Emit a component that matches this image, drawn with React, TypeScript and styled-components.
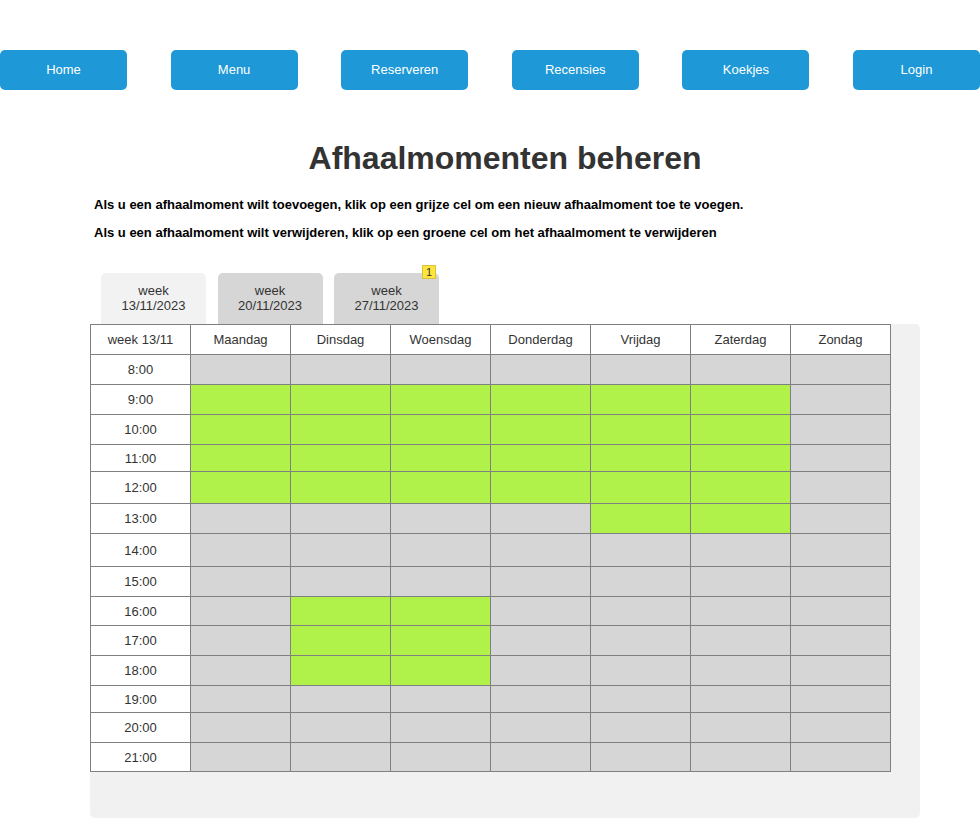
import React from "react";
import styled, { createGlobalStyle } from "styled-components";

const Global = createGlobalStyle`
  html, body { margin: 0; padding: 0; background: #ffffff; }
  body { font-family: "Liberation Sans", Arial, sans-serif; color: #333333; }
`;

const Nav = styled.nav`
  display: flex;
  justify-content: space-between;
  margin-top: 50px;
  width: 980px;
`;

const NavButton = styled.a`
  display: flex;
  align-items: center;
  justify-content: center;
  width: 127px;
  height: 40px;
  box-sizing: border-box;
  padding-bottom: 1px;
  border-radius: 5px;
  background: #1e98d6;
  color: #ffffff;
  font-size: 13px;
  text-decoration: none;
`;

const Main = styled.main`
  margin-left: 90px;
  width: 830px;
`;

const Title = styled.h1`
  margin: 50px 0 20px;
  font-size: 32px;
  font-weight: bold;
  text-align: center;
  color: #333333;
`;

const Intro = styled.p`
  margin: 13px 0 0;
  padding-left: 4px;
  font-size: 13px;
  font-weight: bold;
  color: #000000;
  line-height: 15px;
`;

const Tabs = styled.div`
  display: flex;
  gap: 11.5px;
  margin-top: 33px;
  padding-left: 11px;
`;

const Tab = styled.div<{ $active?: boolean }>`
  position: relative;
  width: 105px;
  height: 51px;
  box-sizing: border-box;
  padding-top: 10px;
  border-radius: 5px 5px 0 0;
  background: ${(p) => (p.$active ? "#f2f2f2" : "#d6d6d6")};
  text-align: center;
  font-size: 13px;
  line-height: 15px;
  color: #333333;
`;

const Badge = styled.span`
  position: absolute;
  top: -8px;
  right: 3px;
  width: 14px;
  height: 14px;
  box-sizing: border-box;
  border: 1px solid #d6c33a;
  background: #ffe53b;
  font-size: 11px;
  line-height: 12px;
  text-align: center;
  color: #333333;
`;

const Panel = styled.section`
  background: #f1f1f1;
  border-radius: 0 5px 5px 5px;
  padding-bottom: 46px;
`;

const Grid = styled.div`
  display: grid;
  width: 801px;
  box-sizing: border-box;
  grid-template-columns: repeat(8, 99px);
  grid-template-rows: 29px 29px 29px 29px 26px 31px 29px 32px 29px 28px 29px 29px 26px 29px 28px;
  gap: 1px;
  padding: 1px;
  background: #808080;
`;

const Cell = styled.div<{ $kind: "label" | "free" | "open" }>`
  display: flex;
  align-items: center;
  justify-content: center;
  font-size: 13px;
  color: #333333;
  background: ${(p) =>
    p.$kind === "label" ? "#ffffff" : p.$kind === "open" ? "#b1f24a" : "#d6d6d6"};
`;

const navItems = ["Home", "Menu", "Reserveren", "Recensies", "Koekjes", "Login"];
const days = ["Maandag", "Dinsdag", "Woensdag", "Donderdag", "Vrijdag", "Zaterdag", "Zondag"];
const hours = [8, 9, 10, 11, 12, 13, 14, 15, 16, 17, 18, 19, 20, 21];

const isOpen = (h: number, d: number) => {
  if (h >= 9 && h <= 12 && d <= 5) return true;
  if (h === 13 && (d === 4 || d === 5)) return true;
  if (h >= 16 && h <= 18 && (d === 1 || d === 2)) return true;
  return false;
};

export default function App() {
  return (
    <>
      <Global />
      <Nav>
        {navItems.map((n) => (
          <NavButton key={n}>{n}</NavButton>
        ))}
      </Nav>
      <Main>
        <Title>Afhaalmomenten beheren</Title>
        <Intro>
          Als u een afhaalmoment wilt toevoegen, klik op een grijze cel om een nieuw afhaalmoment toe te voegen.
        </Intro>
        <Intro>
          Als u een afhaalmoment wilt verwijderen, klik op een groene cel om het afhaalmoment te verwijderen
        </Intro>
        <Tabs>
          <Tab $active>
            week
            <br />
            13/11/2023
          </Tab>
          <Tab>
            week
            <br />
            20/11/2023
          </Tab>
          <Tab>
            week
            <br />
            27/11/2023
            <Badge>1</Badge>
          </Tab>
        </Tabs>
        <Panel>
          <Grid>
            <Cell $kind="label">week 13/11</Cell>
            {days.map((d) => (
              <Cell key={d} $kind="label">
                {d}
              </Cell>
            ))}
            {hours.map((h) => (
              <React.Fragment key={h}>
                <Cell $kind="label">{h}:00</Cell>
                {days.map((d, i) => (
                  <Cell key={d} $kind={isOpen(h, i) ? "open" : "free"} />
                ))}
              </React.Fragment>
            ))}
          </Grid>
        </Panel>
      </Main>
    </>
  );
}
